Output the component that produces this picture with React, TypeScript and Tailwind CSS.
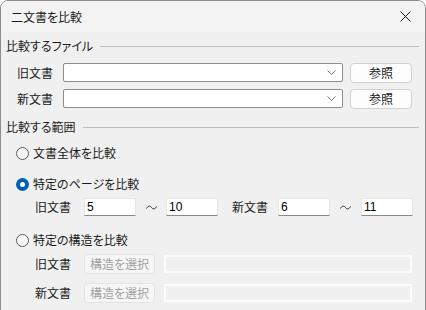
import React from "react";

const font = {
  fontFamily: '"Noto Sans CJK JP", "Noto Sans", sans-serif',
};

function Radio({ checked, label }: { checked?: boolean; label: string }) {
  return (
    <div className="flex items-center h-[16px] pl-[10px]">
      {checked ? (
        <span className="w-[13px] h-[13px] rounded-full bg-[#005fb8] flex items-center justify-center">
          <span className="w-[5px] h-[5px] rounded-full bg-white" />
        </span>
      ) : (
        <span className="w-[13px] h-[13px] rounded-full border border-[#5f5f5f] bg-[#f7f7f7]" />
      )}
      <span className="ml-[4px] text-[12px] text-[#1a1a1a]">{label}</span>
    </div>
  );
}

function GroupHeader({ label }: { label: string }) {
  return (
    <div className="flex items-center h-[16px]">
      <span className="text-[12px] text-[#1a1a1a]">{label}</span>
      <span className="flex-1 ml-[7px] mr-[6px] border-t border-[#bdbdbd]" />
    </div>
  );
}

function FileRow({ label }: { label: string }) {
  return (
    <div className="flex items-center h-[21px]">
      <span className="w-[57px] pl-[11px] text-[12px] text-[#1a1a1a]">{label}</span>
      <div className="w-[280px] h-[19px] bg-white border border-[#8e8e8e] rounded-[2px] flex items-center justify-end pr-[6px]">
        <svg width="9" height="5" viewBox="0 0 9 5">
          <path d="M0.5 0.5 L4.5 4.5 L8.5 0.5" fill="none" stroke="#6a6a6a" strokeWidth="0.9" />
        </svg>
      </div>
      <button className="ml-[7px] w-[62px] h-[20px] bg-[#fdfdfd] border border-[#d2d2d2] rounded-[4px] text-[12px] text-[#1a1a1a] flex items-center justify-center">
        参照
      </button>
    </div>
  );
}

function NumBox({ value, w }: { value: string; w: string }) {
  return (
    <div
      className={`${w} h-[18px] bg-white border border-[#e6e6e6] border-b-[#8a8a8a] flex items-center pl-[2px] text-[12px] text-black`}
      style={{ fontFamily: '"Liberation Sans", sans-serif' }}
    >
      {value}
    </div>
  );
}

function Tilde({ w }: { w: string }) {
  return (
    <span className={`${w} flex justify-center`}>
      <svg width="11" height="5" viewBox="0 0 11 5">
        <path d="M0.5 3.5 C2 0.5 4 0.5 5.5 2.5 C7 4.5 9 4.5 10.5 1.5" fill="none" stroke="#2a2a2a" strokeWidth="1" />
      </svg>
    </span>
  );
}

function StructRow({ label }: { label: string }) {
  return (
    <div className="flex items-center h-[20px]">
      <span className="w-[78px] pl-[29px] text-[12px] text-[#1a1a1a]">{label}</span>
      <div className="w-[71px] h-[20px] bg-[#f6f6f6] border border-[#e4e4e4] rounded-[3px] text-[12px] text-[#a2a2a2] flex items-center justify-center">
        構造を選択
      </div>
      <div className="ml-[9px] w-[248px] h-[18px] border-2 border-[#fbfbfb] bg-[#f0f0f0]" />
    </div>
  );
}

export default function App() {
  return (
    <div
      className="w-[426px] h-[310px] bg-white overflow-hidden [font-feature-settings:'palt']"
      style={font}
    >
      <div className="w-[426px] h-[330px] border border-[#8c8c8c] rounded-t-[8px] bg-[#f0f0f0] overflow-hidden">
        <div className="h-[31px] bg-[#f3f3f3] flex items-center justify-between pl-[10px] pr-[14px]">
          <span className="text-[12px] text-[#1a1a1a]">二文書を比較</span>
          <svg width="11" height="11" viewBox="0 0 11 11">
            <path d="M0.5 0.5 L10.5 10.5 M10.5 0.5 L0.5 10.5" stroke="#1a1a1a" strokeWidth="1" />
          </svg>
        </div>
        <div className="pl-[5px] pt-[6px] flex flex-col">
          <GroupHeader label="比較するファイル" />
          <div className="mt-[8px] flex flex-col gap-[5px]">
            <FileRow label="旧文書" />
            <FileRow label="新文書" />
          </div>
          <div className="mt-[10px]">
            <GroupHeader label="比較する範囲" />
          </div>
          <div className="mt-[10px]">
            <Radio label="文書全体を比較" />
          </div>
          <div className="mt-[15px]">
            <Radio checked label="特定のページを比較" />
          </div>
          <div className="mt-[6px] flex items-center h-[18px]">
            <span className="w-[78px] pl-[29px] text-[12px] text-[#1a1a1a]">旧文書</span>
            <NumBox value="5" w="w-[52px]" />
            <Tilde w="w-[30px]" />
            <NumBox value="10" w="w-[52px]" />
            <span className="ml-[14px] w-[46px] text-[12px] text-[#1a1a1a]">新文書</span>
            <NumBox value="6" w="w-[52px]" />
            <Tilde w="w-[31px]" />
            <NumBox value="11" w="w-[52px]" />
          </div>
          <div className="mt-[16px]">
            <Radio label="特定の構造を比較" />
          </div>
          <div className="mt-[6px] flex flex-col gap-[9px]">
            <StructRow label="旧文書" />
            <StructRow label="新文書" />
          </div>
        </div>
      </div>
    </div>
  );
}
